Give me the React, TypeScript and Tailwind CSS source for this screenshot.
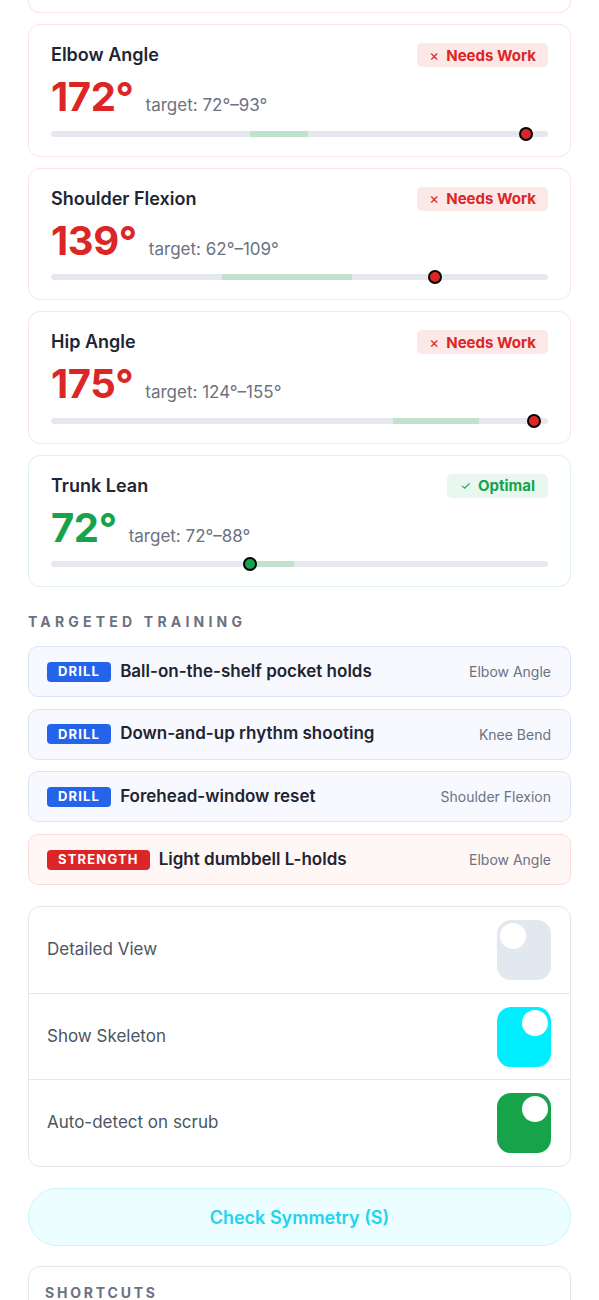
import React from "react";

type Metric = {
  name: string;
  value: number;
  lo: number;
  hi: number;
  ok: boolean;
};

const metrics: Metric[] = [
  { name: "Elbow Angle", value: 172, lo: 72, hi: 93, ok: false },
  { name: "Shoulder Flexion", value: 139, lo: 62, hi: 109, ok: false },
  { name: "Hip Angle", value: 175, lo: 124, hi: 155, ok: false },
  { name: "Trunk Lean", value: 72, lo: 72, hi: 88, ok: true },
];

const drills = [
  { kind: "DRILL", title: "Ball-on-the-shelf pocket holds", meta: "Elbow Angle" },
  { kind: "DRILL", title: "Down-and-up rhythm shooting", meta: "Knee Bend" },
  { kind: "DRILL", title: "Forehead-window reset", meta: "Shoulder Flexion" },
  { kind: "STRENGTH", title: "Light dumbbell L-holds", meta: "Elbow Angle" },
];

function MetricCard({ m }: { m: Metric }) {
  const pct = (v: number) => (v / 180) * 100;
  return (
    <div
      className={`rounded-[12px] border bg-white px-[22px] pt-[18px] pb-[19px] ${
        m.ok ? "border-[#dff0e7]" : "border-[#fce3e3]"
      }`}
    >
      <div className="flex items-center justify-between h-[24px]">
        <div className="text-[18px] font-semibold text-[#1e2533] leading-none">{m.name}</div>
        {m.ok ? (
          <div className="h-[24px] px-[13px] flex items-center rounded-[5px] bg-[#e9f7ee] text-[#16a34a] text-[15px] font-bold leading-none">
            <span className="mr-[7px] text-[12px] font-normal">✓</span>Optimal
          </div>
        ) : (
          <div className="h-[24px] px-[12px] flex items-center rounded-[5px] bg-[#fde8e8] text-[#dc2626] text-[15px] font-bold leading-none">
            <span className="mr-[7px] font-normal">×</span>Needs Work
          </div>
        )}
      </div>
      <div className="mt-[10px] h-[40px] flex items-baseline">
        <div
          className={`text-[40px] leading-[40px] font-bold tracking-[-0.01em] ${
            m.ok ? "text-[#16a34a]" : "text-[#dc2626]"
          }`}
        >
          {m.value}°
        </div>
        <div className="ml-[12px] text-[17px] leading-none text-[#6b7280]">
          target: {m.lo}°–{m.hi}°
        </div>
      </div>
      <div className="relative mt-[13.5px] h-[6px] rounded-full bg-[#e5e9ef]">
        <div
          className="absolute top-0 h-[6px] bg-[#bfe2cd]"
          style={{ left: `${pct(m.lo)}%`, width: `${pct(m.hi) - pct(m.lo)}%` }}
        />
        <div
          className={`absolute top-[-4px] w-[14px] h-[14px] -ml-[7px] rounded-full border-[2.5px] border-black ${
            m.ok ? "bg-[#16a34a]" : "bg-[#dc2626]"
          }`}
          style={{ left: `${pct(m.value)}%` }}
        />
      </div>
    </div>
  );
}

function Toggle({ on, color }: { on: boolean; color: string }) {
  return (
    <div className={`relative w-[54px] h-[60px] rounded-[14px] ${color}`}>
      <div
        className={`absolute top-[3px] w-[26px] h-[26px] rounded-full bg-white ${
          on ? "right-[3px]" : "left-[3px]"
        }`}
      />
    </div>
  );
}

export default function App() {
  return (
    <div className="bg-white min-h-[1300px] px-[28px] font-['Inter','Noto_Sans',sans-serif]">
      <div className="h-[13px] rounded-b-[12px] border border-t-0 border-[#fce3e3]" />
      <div className="mt-[11px] flex flex-col gap-[11px]">
        {metrics.map((m) => (
          <MetricCard key={m.name} m={m} />
        ))}
      </div>

      <div className="mt-[27px] text-[14px] leading-[16px] font-bold tracking-[0.3em] text-[#6b7280]">
        TARGETED TRAINING
      </div>

      <div className="mt-[16px] flex flex-col gap-[11.7px]">
        {drills.map((d) => {
          const strength = d.kind === "STRENGTH";
          return (
            <div
              key={d.title}
              className={`h-[51px] rounded-[10px] border flex items-center pl-[18px] pr-[19px] ${
                strength ? "bg-[#fff6f6] border-[#fcdcdc]" : "bg-[#f7f9ff] border-[#dbe3f8]"
              }`}
            >
              <span
                className={`h-[20px] px-[11px] flex items-center rounded-[4px] text-white text-[13px] font-bold tracking-[0.09em] leading-none ${
                  strength ? "bg-[#dc2626]" : "bg-[#2563eb]"
                }`}
              >
                {d.kind}
              </span>
              <span className="ml-[9px] text-[17px] font-semibold text-[#1f2430]">{d.title}</span>
              <span className="ml-auto text-[14px] text-[#6b7280]">{d.meta}</span>
            </div>
          );
        })}
      </div>

      <div className="mt-[21px] rounded-[12px] border border-[#e5e7eb] flex flex-col divide-y divide-[#e5e7eb]">
        <div className="h-[87px] flex items-center justify-between pl-[18px] pr-[19px]">
          <span className="text-[17px] text-[#4b5563]">Detailed View</span>
          <Toggle on={false} color="bg-[#e2e8f0]" />
        </div>
        <div className="h-[86px] flex items-center justify-between pl-[18px] pr-[19px]">
          <span className="text-[17px] text-[#4b5563]">Show Skeleton</span>
          <Toggle on={true} color="bg-[#00eeff]" />
        </div>
        <div className="h-[86px] flex items-center justify-between pl-[18px] pr-[19px]">
          <span className="text-[17px] text-[#4b5563]">Auto-detect on scrub</span>
          <Toggle on={true} color="bg-[#16a34a]" />
        </div>
      </div>

      <button className="mt-[21px] w-full h-[58px] rounded-full border border-[#c9f7fc] bg-[#ecfeff] text-[#22d3ee] text-[18px] font-semibold">
        Check Symmetry (S)
      </button>

      <div className="mt-[20px] rounded-[12px] border border-[#e5e7eb] px-[16px] pt-[18px] pb-[20px]">
        <div className="text-[14px] leading-[16px] font-bold tracking-[0.2em] text-[#6b7280]">SHORTCUTS</div>
        <div className="h-[40px]" />
      </div>
    </div>
  );
}
